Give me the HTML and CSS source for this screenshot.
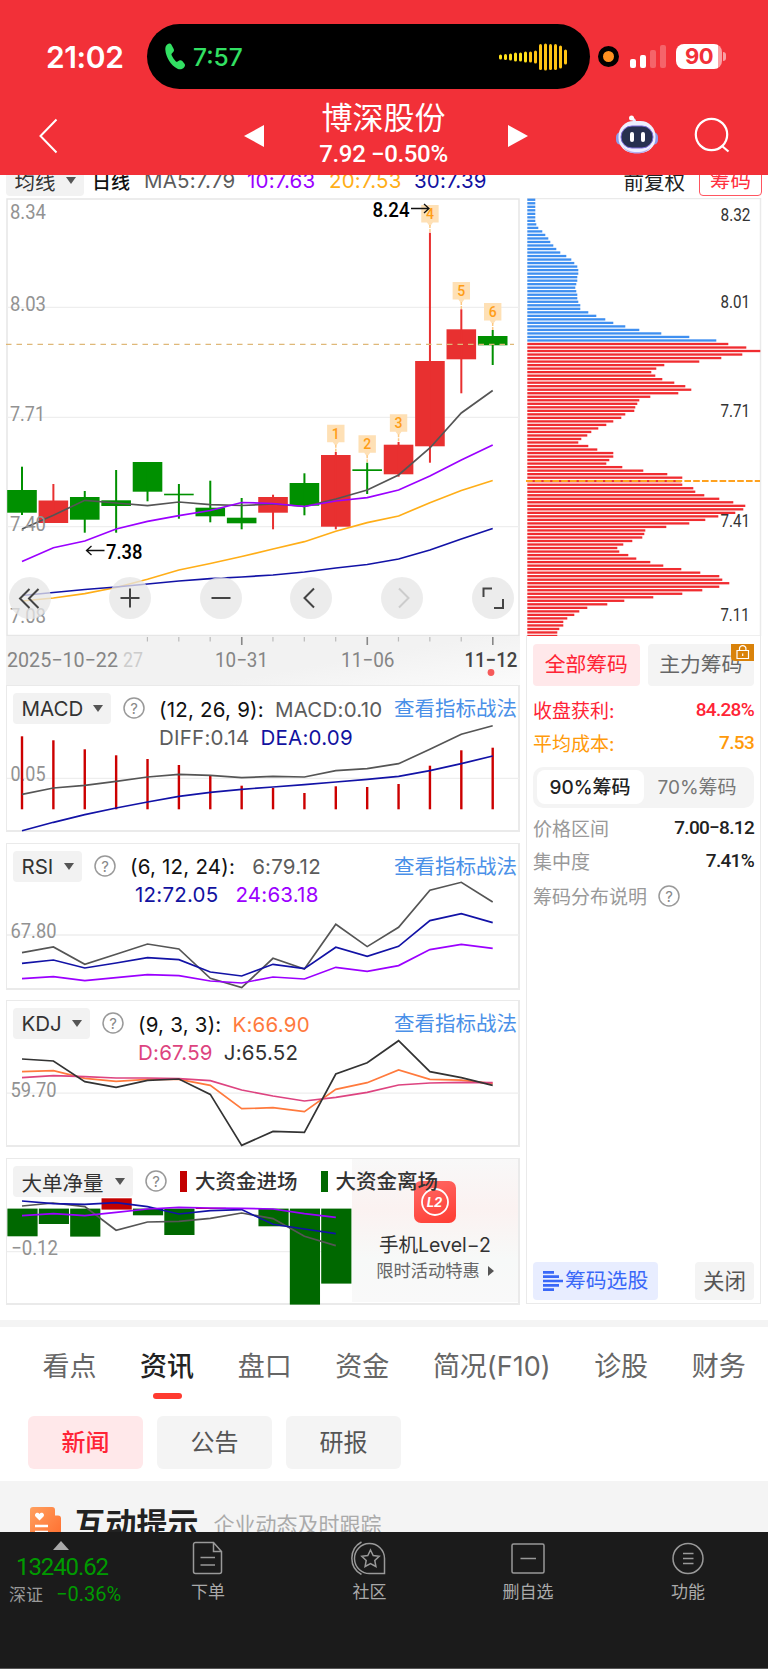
FILE: index.html
```html
<!DOCTYPE html>
<html lang="zh-CN">
<head>
  <meta charset="UTF-8">
  <title>博深股份</title>
  <meta name="viewport" content="width=device-width, initial-scale=1">
  <link rel="stylesheet" href="styles.css">
</head>
<body>

  <header class="header">
    <div class="status">
      <span class="clock">21:02</span>
      <div class="island">
        <svg class="phone" viewBox="0 0 20 27"><path d="M2.500 1.200C4 .2 5.600.3 6.600 2L8.700 6c.6 1.300.3 2.400-.7 3.300L6.800 10.500c-.5.7-.4 1.300 0 2.100 1 2.100 2.200 3.900 3.900 5.600.6.6 1.200.7 1.900.3l1.600-.9c1.100-.6 2.200-.4 3.100.5l2 2.300c1 1.200.9 2.600-.1 3.800-1.700 2-4.200 2.600-6.700 1.500C5.800 22.600.8 14.200.3 6.600.2 4.200.8 2.400 2.500 1.200z"/></svg>
        <span class="call">7:57</span>
        <svg class="wave" viewBox="0 0 68 28" id="wave"></svg>
      </div>
      <span class="rec"></span>
      <svg class="signal" viewBox="0 0 37 23">
        <rect x="0" y="14" width="6" height="9" rx="2"/>
        <rect x="10" y="10" width="6" height="13" rx="2"/>
        <rect class="off" x="20" y="5" width="6" height="18" rx="2"/>
        <rect class="off" x="30" y="0" width="6" height="23" rx="2"/>
      </svg>
      <span class="battery">90</span>
      <span class="nub"></span>
    </div>
    <div class="nav">
      <svg class="back" viewBox="0 0 20 36"><path d="M18.500 1.500 2.500 18l16 16.500"/></svg>
      <svg class="prev" viewBox="0 0 20 22"><path d="M20 0v22L0 11z"/></svg>
      <div class="stock">
        <h1>博深股份</h1>
        <p class="din">7.92 −0.50%</p>
      </div>
      <svg class="next" viewBox="0 0 20 22"><path d="M0 0v22l20-11z"/></svg>
      <svg class="robot" viewBox="0 0 42 40">
        <path d="M19 8c0-3-1-4-3-4" fill="none" stroke="#e8edff" stroke-width="2.500"/>
        <circle cx="15.500" cy="3" r="2.500" fill="#fff"/>
        <rect x="0" y="17" width="42" height="13" rx="5" fill="#8d9bea"/>
        <rect x="2.500" y="6" width="37" height="32" rx="15" fill="#eef0ff"/>
        <path d="M7 31c4 8 24 8 28 0-3 10-25 10-28 0z" fill="#b3aef0"/>
        <rect x="5" y="11" width="32" height="22" rx="11" fill="#27304f" stroke="#7a6ad8" stroke-width="1"/>
        <rect x="14" y="17" width="4" height="10" rx="2" fill="#fff"/>
        <rect x="25" y="17" width="4" height="10" rx="2" fill="#fff"/>
      </svg>
      <svg class="search" viewBox="0 0 36 37"><circle cx="17.500" cy="17.500" r="15.700"/><path d="M28 29l6.500 5.500"/></svg>
    </div>
  </header>

  <div class="ma-bar">
    <span class="pill ma-pill">均线<i class="caret"></i></span>
    <b class="period">日线</b>
    <span class="c-gray ma5">MA5:7.79</span>
    <span class="c-purple ma10">10:7.63</span>
    <span class="c-orange ma20">20:7.53</span>
    <span class="c-navy ma30">30:7.39</span>
    <span class="fuquan">前复权</span>
    <span class="chip-toggle">筹码</span>
  </div>

  <main class="board">
    <section class="charts">
      <div class="kline">
        <svg class="plot" viewBox="6 198 514 438" id="kline"></svg>
        <div class="tools">
          <button><svg viewBox="0 0 42 42"><path d="M20.500 12 11 21.500l9.500 9.500M29.500 12 20 21.500l9.500 9.500"/></svg></button>
          <button><svg viewBox="0 0 42 42"><path d="M11.500 21h19M21 11.500v19"/></svg></button>
          <button><svg viewBox="0 0 42 42"><path d="M11.500 21h19"/></svg></button>
          <button><svg viewBox="0 0 42 42"><path d="M24 11.500 14.500 21l9.500 9.500"/></svg></button>
          <button class="dim"><svg viewBox="0 0 42 42"><path d="M18 11.500 27.500 21 18 30.500"/></svg></button>
          <button><svg viewBox="0 0 42 42"><path d="M20 11.500h-8.500V20M31 22v9h-9"/></svg></button>
        </div>
      </div>
      <svg class="axis" viewBox="6 636 514 49" id="axis"></svg>

      <div class="panel">
        <svg class="plot" viewBox="6 685 514 147" id="macd"></svg>
        <div class="panel-head">
          <span class="pill w-macd">MACD<i class="caret"></i></span>
          <svg class="help" viewBox="0 0 22 22"><circle cx="11" cy="11" r="10"/><text x="11" y="16.500">?</text></svg>
          <div class="params">
            <p><span class="black">(12, 26, 9):</span><span class="c-gray">MACD:0.10</span></p>
            <p><span class="c-gray">DIFF:0.14</span><span class="c-navy">DEA:0.09</span></p>
          </div>
          <a class="howto">查看指标战法</a>
        </div>
      </div>

      <div class="panel">
        <svg class="plot" viewBox="6 842.700 514 147" id="rsi"></svg>
        <div class="panel-head">
          <span class="pill w-rsi">RSI<i class="caret"></i></span>
          <svg class="help" viewBox="0 0 22 22"><circle cx="11" cy="11" r="10"/><text x="11" y="16.500">?</text></svg>
          <div class="params rsi">
            <p><span class="black">(6, 12, 24):</span><span class="c-gray">6:79.12</span></p>
            <p class="second"><span class="c-navy">12:72.05</span><span class="c-purple">24:63.18</span></p>
          </div>
          <a class="howto">查看指标战法</a>
        </div>
      </div>

      <div class="panel">
        <svg class="plot" viewBox="6 1000.300 514 147" id="kdj"></svg>
        <div class="panel-head">
          <span class="pill w-kdj">KDJ<i class="caret"></i></span>
          <svg class="help" viewBox="0 0 22 22"><circle cx="11" cy="11" r="10"/><text x="11" y="16.500">?</text></svg>
          <div class="params kdj">
            <p><span class="black">(9, 3, 3):</span><span class="c-k">K:66.90</span></p>
            <p><span class="c-d">D:67.59</span><span class="c-j">J:65.52</span></p>
          </div>
          <a class="howto">查看指标战法</a>
        </div>
      </div>

      <div class="panel">
        <div class="promo">
          <svg class="l2" viewBox="0 0 42 42"><circle cx="21" cy="21" r="13"/><text x="20.500" y="26">L2</text></svg>
          <p class="promo-title">手机Level−2</p>
          <p class="promo-sub">限时活动特惠<i></i></p>
        </div>
        <svg class="plot" viewBox="6 1157.700 514 147" id="flow"></svg>
        <div class="panel-head">
          <span class="pill w-flow">大单净量<i class="caret"></i></span>
          <svg class="help" viewBox="0 0 22 22"><circle cx="11" cy="11" r="10"/><text x="11" y="16.500">?</text></svg>
          <div class="legend">
            <span><i class="in"></i>大资金进场</span>
            <span><i class="out"></i>大资金离场</span>
          </div>
        </div>
      </div>
    </section>

    <aside class="chips">
      <svg class="dist" viewBox="526 198 236 438" id="dist"></svg>
      <div class="chips-body">
        <div class="chip-tabs">
          <span class="on">全部筹码</span>
          <span>主力筹码
            <svg class="lock" viewBox="0 0 23 17"><path d="M0 0h23v17H4a4 4 0 0 1-4-4z" fill="#d9820a"/><path d="M6 6.500h11.500v8H6zM8.500 6.500V4.500a3.200 2.800 0 0 1 6.400 0v2M11.700 9.500v2.500" fill="none" stroke="#fff" stroke-width="1.200"/></svg>
          </span>
        </div>
        <div class="stat red"><span>收盘获利:</span><b class="din">84.28%</b></div>
        <div class="stat amber"><span>平均成本:</span><b class="din">7.53</b></div>
        <div class="segment"><span class="on">90%筹码</span><span>70%筹码</span></div>
        <div class="stat"><span>价格区间</span><b class="din">7.00−8.12</b></div>
        <div class="stat"><span>集中度</span><b class="din">7.41%</b></div>
        <div class="stat explain"><span>筹码分布说明</span><svg class="help" viewBox="0 0 22 22"><circle cx="11" cy="11" r="10"/><text x="11" y="16.500">?</text></svg></div>
        <div class="chip-actions">
          <span class="pick"><svg viewBox="0 0 20 20"><path d="M0 1.400h11M0 5.700h16M0 10h20M0 14.300h16M0 18.600h11"/></svg>筹码选股</span>
          <span class="close">关闭</span>
        </div>
      </div>
    </aside>
  </main>

  <nav class="tabs">
    <span>看点</span>
    <span class="on">资讯</span>
    <span>盘口</span>
    <span>资金</span>
    <span>简况(F10)</span>
    <span>诊股</span>
    <span>财务</span>
  </nav>
  <div class="filters">
    <span class="on">新闻</span>
    <span>公告</span>
    <span>研报</span>
  </div>
  <section class="tips">
    <svg viewBox="0 0 32 36">
      <defs><linearGradient id="tip" x1="0" y1="0" x2="1" y2="1"><stop offset="0" stop-color="#ffa05f"/><stop offset="1" stop-color="#ff6a2b"/></linearGradient></defs>
      <path d="M3 0h19a3 3 0 0 1 3 3v5.500h3a3 3 0 0 1 3 3V36H0V3a3 3 0 0 1 3-3z" fill="url(#tip)"/>
      <path d="M9.500 13.500 5.500 9.500c-2-3 2.300-5.500 4-2.500 1.700-3 6-.5 4 2.500z" fill="#fff"/>
      <path d="M5 19h13M5 25h13" stroke="#fff" stroke-width="2.400"/>
    </svg>
    <h2>互动提示</h2>
    <span>企业动态及时跟踪</span>
  </section>

  <footer class="footer">
    <div class="index">
      <i></i>
      <b class="din">13240.62</b>
      <p><span>深证</span><em class="din">−0.36%</em></p>
    </div>
    <div class="action">
      <svg viewBox="0 0 36 34"><path d="M5.500 1.500h18l8 9v20a2 2 0 0 1-2 2h-24a2 2 0 0 1-2-2v-27a2 2 0 0 1 2-2zM23.500 1.500v9h8M10.500 16.500H25M10.500 24H25"/></svg>
      <span>下单</span>
    </div>
    <div class="action">
      <svg viewBox="0 0 36 34"><path d="M34.500 32.500h-14a15 15 0 1 1 14-15zM11.500 1A18.500 18.500 0 0 0 11.500 33.500M20.500 9l2.700 5.500 6 .8-4.400 4.200 1.100 6-5.400-2.900-5.400 2.900 1.100-6-4.400-4.200 6-.8z"/></svg>
      <span class="community">社区</span>
    </div>
    <div class="action">
      <svg viewBox="0 0 36 34"><path d="M3.500 3h29a1.500 1.500 0 0 1 1.500 1.500v26a1.500 1.500 0 0 1-1.500 1.500h-29A1.500 1.500 0 0 1 2 30.500v-26A1.500 1.500 0 0 1 3.500 3zM10.500 17.500H26"/></svg>
      <span>删自选</span>
    </div>
    <div class="action">
      <svg viewBox="0 0 36 34"><circle cx="18" cy="17.500" r="15"/><path d="M13 12.500h10.500M13 17.500h10.500M13 22.500h10.500"/></svg>
      <span>功能</span>
    </div>
  </footer>

  <script>
    const X0 = 22, STEP = 31.38;
    const RED = '#e83030', GREEN = '#009000';
    const cx = i => X0 + i * STEP;

    function rect(x, y, w, h, fill) {
      return `<rect x="${x}" y="${y}" width="${w}" height="${h}" fill="${fill}"/>`;
    }
    function line(values, color) {
      const pts = values.map((y, i) => cx(i).toFixed(1) + ',' + y).join(' ');
      return `<polyline points="${pts}" stroke="${color}" class="ln"/>`;
    }
    function label(str, x, y, w, cls) {
      return `<text x="${x}" y="${y}" textLength="${w}" lengthAdjust="spacingAndGlyphs" class="${cls}">${str}</text>`;
    }
    function grid(y) {
      return `<path d="M7 ${y}H519" class="grid"/>`;
    }
    function draw(id, parts) {
      document.getElementById(id).innerHTML = parts.join('');
    }

    // candles: [color, body top, body bottom, wick top, wick bottom]
    const candles = [
      [GREEN, 490, 512.700, 466.700, 515], [RED, 500.500, 523, 484, 523],
      [GREEN, 497, 519.700, 491, 532.700], [GREEN, 500.300, 506, 470, 532.700],
      [GREEN, 462, 491.700, 462, 501.300], [GREEN, 493.700, 495.300, 484, 518.700],
      [GREEN, 507.700, 516.300, 480.700, 522.300], [GREEN, 517.700, 523.300, 498, 529.300],
      [RED, 497, 512.700, 494.700, 529.300], [GREEN, 483, 505.700, 473.300, 515.300],
      [RED, 455, 526.700, 452, 529.300], [GREEN, 469.300, 471, 462.700, 494],
      [RED, 444.700, 474.300, 442, 476.700], [RED, 361, 446.300, 232.700, 462.700],
      [RED, 329.300, 359.300, 309.300, 393.300], [GREEN, 336, 345.300, 330, 365]
    ];
    const ma5 = [529, 515.300, 500.300, 503, 505.700, 502, 504.700, 505.500, 504, 506.500, 499, 490, 475, 448, 413, 390.500];
    const ma10 = [561.500, 547.700, 541, 529, 521.300, 515.700, 510.500, 502.500, 503.500, 506.500, 501, 497.700, 490, 476, 460, 445];
    const ma20 = [601, 598, 593.700, 587.500, 579.300, 570, 563.500, 556.500, 549, 541.700, 531.300, 522.700, 516, 502.700, 490.500, 480.500];
    const ma30 = [595.500, 592.500, 589.500, 587, 584, 581, 578.700, 577, 575, 572, 568, 564.500, 559, 550, 539, 528.500];
    // numbered signals: [candle, flag top, wick top]
    const flags = [[10, 424.700, 452], [11, 435.300, 463], [12, 414.300, 442], [13, 205, 233], [14, 282, 310], [15, 303, 330]];

    draw('kline', [
      '<rect x="7" y="199" width="512" height="436.500" class="frame"/>',
      grid(307.300), grid(417.400), grid(526.700),
      ...candles.map(([c, t, b, wt, wb], i) => rect(cx(i) - 14.800, t, 29.600, b - t, c) + rect(cx(i) - 1, wt, 2, wb - wt, c)),
      '<path d="M6 344.300H514" class="last"/>',
      ...flags.map(([i, t, w], n) => {
        const x = cx(i);
        return `<path d="M${x - 8.700} ${t}h17.400v17.500h-5.700l-3 4-3-4h-5.700z" fill="#fee0b5"/>` +
          `<path d="M${x} ${t + 20}V${w}" class="stem"/>` +
          `<text x="${x}" y="${t + 14}" class="flag">${n + 1}</text>`;
      }),
      line(ma5, '#555'), line(ma10, '#9b00ff'), line(ma20, '#ffae18'), line(ma30, '#1212a6'),
      label('8.34', 10, 218.500, 36, 'scale'), label('8.03', 10, 310.500, 36, 'scale'),
      label('7.71', 10, 420.500, 35, 'scale'), label('7.40', 10, 530.500, 36, 'scale'),
      label('7.08', 10, 622.500, 36, 'scale'),
      label('8.24', 372.500, 216.800, 37, 'mark'), label('7.38', 106, 558.500, 36.500, 'mark'),
      '<path d="M411 208.500h18M424 204l5 4.500-5 4.500M104.500 550.500h-18M91.500 546l-5 4.500 5 4.500" class="arrow"/>'
    ]);

    draw('axis', [
      ...candles.map((c, i) => i < 4 ? '' : rect(cx(i) - .7, 637, i % 4 === 3 ? 1.600 : 1.200, i % 4 === 3 ? 8 : 4.500, i % 4 === 3 ? '#888' : '#bbb')),
      label('2025−10−22', 7, 667, 111, 'date'),
      label('27', 123, 667, 20, 'date faint'),
      label('10−31', 215, 667, 53, 'date'),
      label('11−06', 341, 667, 53.500, 'date'),
      label('11−12', 464.500, 667, 53, 'date now'),
      '<circle cx="491" cy="672.500" r="3.400" fill="#f65a5a"/>'
    ]);

    const macdTops = [736.300, 740.300, 749.300, 755.300, 759, 765, 776, 785.700, 788, 793, 786.300, 787, 784, 765.700, 750.300, 747.700];
    draw('macd', [
      grid(778.300), label('0.05', 10.500, 781, 35, 'scale'),
      ...macdTops.map((t, i) => rect(cx(i) - 1.200, t, 2.400, 809.300 - t, '#cc0000')),
      line([794.300, 788, 785.300, 781.300, 777, 774.300, 775.300, 777.700, 776.300, 777, 770.700, 768.700, 763.700, 749.300, 734.300, 725.700], '#555'),
      line([830.700, 822.300, 814.700, 808, 802, 796.300, 792.300, 789.300, 787, 784.700, 782, 779.300, 776.300, 770.700, 763.700, 756], '#1212a6')
    ]);
    draw('rsi', [
      grid(935.700), label('67.80', 10.500, 939.200, 46, 'scale'),
      line([953.300, 947.700, 965, 955, 944.700, 949.700, 979, 988.300, 959, 969.700, 925, 947.300, 928, 891, 883, 902.700], '#555'),
      line([964, 960.700, 968.700, 963.700, 958.300, 960.300, 972.700, 976.700, 965, 969.300, 948, 957, 947, 921.300, 914.300, 923.300], '#1212a6'),
      line([979.300, 977.300, 981.300, 978.300, 975.300, 976.300, 981.700, 983.700, 977.700, 979.700, 968, 972, 966.300, 950.300, 945, 949], '#9b00ff')
    ]);
    draw('kdj', [
      grid(1093.500), label('59.70', 10.500, 1097, 46, 'scale'),
      line([1072, 1071, 1078.700, 1081.700, 1079.700, 1079.700, 1085.700, 1109, 1108, 1112, 1089.700, 1083, 1070.300, 1079.700, 1080.500, 1084], '#ff7a3d'),
      line([1078, 1076, 1077, 1078.300, 1078.300, 1079, 1081, 1090.300, 1096.300, 1101.300, 1097.700, 1092.700, 1085.300, 1083.300, 1082.700, 1083], '#dd4480'),
      line([1059.300, 1061.300, 1082, 1087.700, 1080.700, 1079.300, 1094.700, 1145.700, 1131.700, 1132.700, 1074.300, 1063, 1041, 1072, 1078, 1085.700], '#333')
    ]);

    // net big orders: [top, bottom, color]
    const DARK = '#006800';
    const flow = [
      [1208.300, 1236, DARK], [1208.300, 1223.700, DARK], [1208.300, 1236.300, DARK], [1198, 1209.300, '#c30000'],
      [1208.300, 1215, DARK], [1208.300, 1234.700, DARK], [1207.500, 1208.700, '#c30000'], [1208, 1208.500, DARK],
      [1208.300, 1226, DARK], [1208.300, 1304.300, DARK], [1208.300, 1283.300, DARK]
    ];
    draw('flow', [
      '<path d="M7 1251.300H351" class="grid"/>',
      ...flow.map(([t, b, c], i) => rect(cx(i) - 14.600, t, 30.200, b - t, c)),
      line([1205.700, 1202.700, 1206.300, 1230, 1221.700, 1221, 1218, 1212.700, 1218.300, 1236, 1245.300], '#555'),
      line([1200.700, 1203.300, 1204, 1202.300, 1206.300, 1213.700, 1210.300, 1209.300, 1224, 1228.700, 1233.300], '#1212a6'),
      line([1215.300, 1213.300, 1215.300, 1212, 1208.700, 1207, 1207.700, 1208, 1208.700, 1213.300, 1217], '#9b00ff'),
      label('−0.12', 11, 1254.500, 47, 'scale')
    ]);

    // chip distribution, top price first; the first 41 rows are above the close
    const dist = [8, 8, 8, 8, 8, 8, 8, 9, 11, 15, 18, 21, 23, 26, 29, 33, 39, 44, 47, 50, 51, 51, 50, 50, 49, 48, 49, 50, 50, 51, 53, 53, 61, 69, 78, 86, 98, 112, 134, 162, 189,
      201, 219, 233, 215, 194, 172, 137, 129, 124, 128, 135, 147, 158, 164, 151, 123, 112, 110, 108, 107, 98, 94, 86, 79, 71,
      64, 60, 54, 51, 61, 70, 86, 86, 82, 79, 95, 116, 140, 155, 154, 155, 166, 168, 177, 192, 206, 218, 216, 208, 191, 178, 162, 139, 118, 117, 115, 105, 96, 90, 92, 101, 109, 123, 136, 154, 173, 192, 195, 202, 192, 175, 155, 126, 97, 80, 60, 52, 47, 40, 36, 36, 32, 30, 30];
    draw('dist', [
      '<path d="M527 198.500h234M760.500 198v438M526 636h235" class="edge"/>',
      ...dist.map((w, i) => {
        const y = 199.700 + i * 3.518;
        return rect(527.300, (y - 1.100).toFixed(2), w, 2.300, i < 41 ? '#3f8ff0' : '#f02c30');
      }),
      '<path d="M526 481H760" class="cost"/>',
      label('8.32', 720.500, 221, 30, 'price'), label('8.01', 720.500, 307.500, 29.500, 'price'),
      label('7.71', 720.500, 417.300, 29.500, 'price'), label('7.41', 720.500, 526.700, 29.500, 'price'),
      label('7.11', 720.500, 621, 29, 'price')
    ]);

    draw('wave', [5, 6, 7, 9, 9, 11, 11, 13, 26, 27, 26, 26, 23, 15].map((h, i) =>
      `<rect x="${i * 5}" y="${14 - h / 2}" width="3" height="${h}" rx="1.500" fill="${i < 6 ? '#ffe11a' : '#ffc414'}"/>`));
  </script>
</body>
</html>
```
FILE: styles.css
```css
* {
  box-sizing: border-box;
}
body {
  margin: 0;
  width: 768px;
  height: 1669px;
  overflow: hidden;
  background: #fff;
  color: #333;
  font-family: Inter, "Noto Sans CJK SC", sans-serif;
  font-size: 20.5px;
  display: flex;
  flex-direction: column;
}
p, h1, h2 {
  margin: 0;
}
svg {
  display: block;
  flex: none;
}
.din {
  font-family: Roboto, sans-serif;
}
.c-gray { color: #5c5c5c; }
.c-purple { color: #9b00ff; }
.c-orange { color: #ffae18; }
.c-navy { color: #1212a0; }
.c-k { color: #ff7a3d; }
.c-d { color: #dd4480; }
.c-j { color: #333; }
.black { color: #111; }

/* header */
.header {
  height: 175px;
  flex: none;
  padding-top: 24px;
  background: #f23038;
  color: #fff;
  position: relative;
  z-index: 2;
}
.status {
  display: flex;
  align-items: center;
  height: 65px;
}
.clock {
  width: 101px;
  margin-left: 46px;
  font-size: 30px;
  font-weight: 600;
  letter-spacing: -.4px;
}
.island {
  width: 443px;
  height: 65px;
  border-radius: 33px;
  background: #000;
  display: flex;
  align-items: center;
  padding: 0 23px 0 18px;
}
.phone {
  width: 20px;
  height: 27px;
  fill: #32e063;
}
.call {
  color: #32e063;
  font-size: 24.5px;
  font-weight: 500;
  margin: 0 auto 0 8px;
}
.wave {
  width: 68px;
  height: 28px;
}
.rec {
  width: 21px;
  height: 21px;
  margin-left: 8px;
  border-radius: 50%;
  border: 5.5px solid #000;
  background: #ff9020;
}
.signal {
  width: 37px;
  height: 23px;
  margin: -1px 0 0 11px;
  fill: #fff;
}
.signal .off {
  opacity: .25;
}
.battery {
  width: 46px;
  height: 25px;
  margin-left: 9px;
  border-radius: 8px;
  background: linear-gradient(90deg, #fff 42px, #f9a0a4 42px);
  color: #f23038;
  font-size: 22px;
  font-weight: 700;
  line-height: 25px;
  text-align: center;
  letter-spacing: -.5px;
}
.nub {
  width: 3px;
  height: 9px;
  margin-left: 1px;
  border-radius: 0 3px 3px 0;
  background: #f9a0a4;
}
.nav {
  display: flex;
  height: 86px;
  align-items: center;
}
.back {
  width: 20px;
  height: 36px;
  margin: 7px 0 0 38px;
  fill: none;
  stroke: #fff;
  stroke-width: 2;
}
.prev, .next {
  width: 20px;
  height: 22px;
  margin-top: 7px;
  fill: #fff;
}
.prev {
  margin-left: 186px;
}
.stock {
  width: 244px;
  padding-right: 5px;
  text-align: center;
}
.stock h1 {
  font-size: 31px;
  font-weight: 400;
  line-height: 38px;
  margin-top: 7px;
}
.stock p {
  font-size: 24px;
  font-weight: 500;
  line-height: 35px;
  letter-spacing: -.35px;
}
.robot {
  width: 42px;
  height: 40px;
  margin: 5px 0 0 88px;
}
.search {
  width: 36px;
  height: 37px;
  margin: 7px 0 0 36px;
  fill: none;
  stroke: #fff;
  stroke-width: 2.2;
}

/* moving averages, scrolled partly under the header */
.ma-bar {
  display: flex;
  align-items: center;
  flex: none;
  height: 31px;
  margin: -10px 6px 2px;
  white-space: nowrap;
}
.pill {
  display: flex;
  align-items: center;
  justify-content: space-between;
  height: 31px;
  flex: none;
  padding: 0 8.5px 0 8.5px;
  border-radius: 4px;
  background: #f2f2f2;
  color: #333;
}
.caret {
  border: 5px solid transparent;
  border-top: 7px solid #555;
  border-bottom: 0;
}
.ma-pill { width: 78px; }
.period {
  width: 52px;
  margin-left: 8px;
  font-size: 19px;
  font-weight: 500;
  color: #111;
}
.ma5 { width: 103px; }
.ma10 { width: 82px; }
.ma20 { width: 85px; }
.ma5, .ma10, .ma20, .ma30 {
  letter-spacing: .2px;
}
.fuquan {
  margin-left: auto;
  color: #222;
}
.chip-toggle {
  width: 63px;
  height: 30px;
  margin-left: 14px;
  border: 1.5px solid #ff5560;
  border-radius: 4px;
  color: #ff3040;
  text-align: center;
  line-height: 27px;
}

/* charts */
.board {
  display: flex;
  flex: none;
  height: 1122px;
  padding-left: 6px;
}
.charts {
  width: 514px;
}
.kline {
  position: relative;
  height: 438px;
}
.plot {
  position: absolute;
  inset: 0;
  width: 514px;
  height: 100%;
}
.frame {
  fill: none;
  stroke: #e6e6e6;
  stroke-width: 1.5;
}
.grid {
  stroke: #eee;
  stroke-width: 1.3;
}
.ln {
  fill: none;
  stroke-width: 1.7;
}
.last {
  stroke: #dfb878;
  stroke-width: 1.2;
  stroke-dasharray: 5.5 5;
}
.stem {
  stroke: #fdc984;
  stroke-width: 1.5;
  stroke-dasharray: 3 1;
}
.flag {
  font: 500 14px Roboto, sans-serif;
  fill: #ff9d17;
  text-anchor: middle;
}
.scale, .date, .mark, .price {
  font-family: Roboto, sans-serif;
  font-size: 21px;
}
.scale { fill: #929292; }
.mark { fill: #000; font-weight: 500; }
.price { fill: #333; font-size: 18px; }
.date { fill: #858585; }
.date.faint { fill: #ccc; }
.date.now { fill: #444; font-weight: 500; }
.arrow {
  fill: none;
  stroke: #111;
  stroke-width: 1.3;
}
.tools {
  position: absolute;
  left: 3px;
  top: 379px;
  display: flex;
  gap: 48.8px;
}
.tools button {
  width: 42px;
  height: 42px;
  padding: 0;
  border: 0;
  border-radius: 50%;
  background: rgba(230, 230, 230, .76);
}
.tools button:first-child {
  margin-right: 9px;
}
.tools path {
  fill: none;
  stroke: #444;
  stroke-width: 2;
}
.tools .dim path {
  stroke: #ccc;
}
.axis {
  width: 514px;
  height: 49px;
  background: linear-gradient(170deg, #f2f2f2 60%, #fbfbfb);
}
.panel {
  position: relative;
  height: 147px;
  margin-bottom: 10.7px;
  border: 2px solid #eaeaea;
  border-width: 1.5px 2px 2px 1.5px;
}
.panel .plot {
  inset: -1.5px;
  height: 147px;
}
.panel-head {
  position: relative;
  display: flex;
  padding: 7px 0 0 6px;
  white-space: nowrap;
}
.w-macd { width: 98px; }
.w-rsi { width: 69px; }
.w-kdj { width: 77px; }
.w-flow { width: 120px; }
.help {
  width: 22px;
  height: 22px;
  margin: 4px 0 0 12px;
}
.help circle {
  fill: none;
  stroke: #999;
  stroke-width: 1.5;
}
.help text {
  font: 15px Inter, sans-serif;
  fill: #888;
  text-anchor: middle;
}
.params {
  margin-left: 14px;
  line-height: 28px;
  padding-top: 2.5px;
  letter-spacing: .22px;
}
.params p {
  display: flex;
  gap: 11px;
}
.params.rsi p { gap: 17px; }
.params.rsi .second { padding-left: 5px; }
.howto {
  position: absolute;
  right: 1px;
  top: 8px;
  line-height: 30px;
  color: #4a90e8;
}
.legend {
  display: flex;
  gap: 23px;
  margin-left: 13px;
  line-height: 30px;
  font-weight: 500;
}
.legend span {
  display: flex;
  align-items: center;
  gap: 8px;
}
.legend i {
  width: 7px;
  height: 21px;
}
.legend .in { background: #c30000; }
.legend .out { background: #006800; }
.promo {
  position: absolute;
  right: 0;
  top: 0;
  width: 166px;
  height: 143px;
  padding-top: 22px;
  display: flex;
  flex-direction: column;
  align-items: center;
  background: linear-gradient(#f8f8f8, #fbf2f1 35%, #f7f9f8 70%, #f9f9f9);
}
.l2 {
  width: 42px;
  height: 42px;
  border-radius: 7px;
  background: linear-gradient(160deg, #ff6a66, #ff3c32);
}
.l2 circle {
  fill: none;
  stroke: #fff;
  stroke-width: 1.8;
}
.l2 text {
  font: italic 700 13px Inter, sans-serif;
  fill: #fff;
  text-anchor: middle;
}
.promo-title {
  margin-top: 7px;
  line-height: 30px;
  font-size: 19.5px;
}
.promo-sub {
  display: flex;
  align-items: center;
  gap: 8px;
  line-height: 22px;
  font-size: 17.3px;
  color: #666;
}
.promo-sub i {
  border: 5px solid transparent;
  border-left: 6px solid #555;
  border-right: 0;
}

/* chip distribution */
.chips {
  width: 236px;
  margin-left: 6px;
  height: 1106px;
  display: flex;
  flex-direction: column;
}
.dist {
  width: 236px;
  height: 438px;
}
.edge {
  fill: none;
  stroke: #eaeaea;
  stroke-width: 1.5;
}
.cost {
  stroke: #ffa21f;
  stroke-width: 2;
  stroke-dasharray: 6.6 2.2;
}
.chips-body {
  flex: 1;
  display: flex;
  flex-direction: column;
  margin-right: 1px;
  padding: 8px 6px 3px;
  border: solid #eaeaea;
  border-width: 0 1.5px 1.5px;
  white-space: nowrap;
}
.chip-tabs {
  display: flex;
  gap: 8px;
  margin-bottom: 7px;
}
.chip-tabs > span {
  position: relative;
  width: 107px;
  height: 41.5px;
  font-size: 20.8px;
  line-height: 41px;
  text-align: center;
  border-radius: 4px;
  background: #f4f4f4;
  color: #666;
}
.chip-tabs > .on {
  background: #ffe8ea;
  color: #ff2436;
}
.lock {
  position: absolute;
  right: 0;
  top: 0;
  width: 23px;
  height: 17px;
}
.stat {
  display: flex;
  align-items: center;
  justify-content: space-between;
  height: 33.3px;
  font-size: 19px;
  color: #999;
}
.stat b {
  font-size: 19px;
  font-weight: 500;
  letter-spacing: -.7px;
  color: #222;
}
.red, .red b { color: #ff2436; }
.amber, .amber b { color: #ff9a0a; }
.segment {
  display: flex;
  height: 41px;
  margin: 7.5px 0 3px;
  padding: 3.5px;
  border-radius: 10px;
  background: #f4f4f4;
  font-size: 19px;
  line-height: 35px;
  color: #777;
}
.segment span {
  width: 107px;
  text-align: center;
}
.segment .on {
  border-radius: 8px;
  background: #fff;
  color: #222;
  font-weight: 500;
}
.explain {
  height: 37px;
  justify-content: flex-start;
}
.explain .help {
  margin: 0 0 0 11px;
}
.chip-actions {
  display: flex;
  justify-content: space-between;
  margin-top: auto;
  line-height: 38px;
}
.pick {
  display: flex;
  align-items: center;
  gap: 2px;
  width: 125px;
  height: 38px;
  padding-left: 10px;
  border-radius: 4px;
  background: #e8edff;
  color: #3a68f8;
  font-size: 20.8px;
}
.pick svg {
  width: 20px;
  height: 20px;
  stroke: #3a68f8;
  stroke-width: 2.7;
}
.close {
  width: 59px;
  text-align: center;
  border-radius: 4px;
  background: #f4f4f4;
  color: #555;
  font-size: 21.5px;
}

/* news */
.tabs {
  display: flex;
  flex: none;
  gap: 43.6px;
  height: 96px;
  padding: 7px 0 0 42.5px;
  background: linear-gradient(#f4f4f4 7px, #fff 7px);
  font-size: 27px;
  line-height: 80px;
  color: #666;
  white-space: nowrap;
}
.tabs .on {
  color: #222;
  font-weight: 500;
}
.tabs .on::after {
  content: "";
  display: block;
  width: 29px;
  height: 5.5px;
  margin: -14px auto 0;
  border-radius: 3px;
  background: #ff3b30;
}
.filters {
  display: flex;
  flex: none;
  gap: 14px;
  height: 65px;
  padding-left: 28px;
  font-size: 24px;
  line-height: 54px;
}
.filters span {
  width: 115px;
  height: 53px;
  border-radius: 6px;
  background: #f4f4f4;
  color: #555;
  text-align: center;
}
.filters .on {
  background: #ffe8ea;
  color: #ff2436;
  font-weight: 500;
}
.tips {
  display: flex;
  flex: none;
  height: 51px;
  padding: 26px 0 0 30px;
  overflow: hidden;
  background: #f4f4f4;
}
.tips svg {
  width: 32px;
  height: 36px;
}
.tips h2 {
  margin: 0 15px 0 12.5px;
  font-size: 31px;
  font-weight: 600;
  line-height: 33px;
  color: #222;
}
.tips span {
  font-size: 21px;
  line-height: 35px;
  color: #aaa;
}

/* bottom bar */
.footer {
  display: flex;
  flex: 1;
  background: #1b1b1b;
  border-bottom: 1px solid #555;
}
.index {
  width: 128px;
  display: flex;
  flex-direction: column;
  color: #009a00;
}
.index i {
  width: 0;
  margin: 9px 0 0 53px;
  border: 8px solid transparent;
  border-top: 0;
  border-bottom: 9px solid #aaa;
}
.index b {
  margin-left: 16px;
  font-size: 24px;
  font-weight: 400;
  line-height: 34px;
  letter-spacing: -1.1px;
}
.index p {
  display: flex;
  align-items: center;
  gap: 13px;
  margin: -2px 0 0 9px;
  line-height: 26px;
}
.index span {
  font-size: 17px;
  color: #999;
}
.index em {
  margin-top: -2px;
  font-size: 20px;
  font-style: normal;
}
.action {
  width: 160px;
  display: flex;
  flex-direction: column;
  align-items: center;
  padding-top: 9px;
  font-size: 17px;
  line-height: 34px;
  color: #aaa;
}
.action svg {
  width: 36px;
  height: 34px;
  fill: none;
  stroke: #999;
  stroke-width: 1.5;
}
.community {
  margin-left: 3px;
}
```
